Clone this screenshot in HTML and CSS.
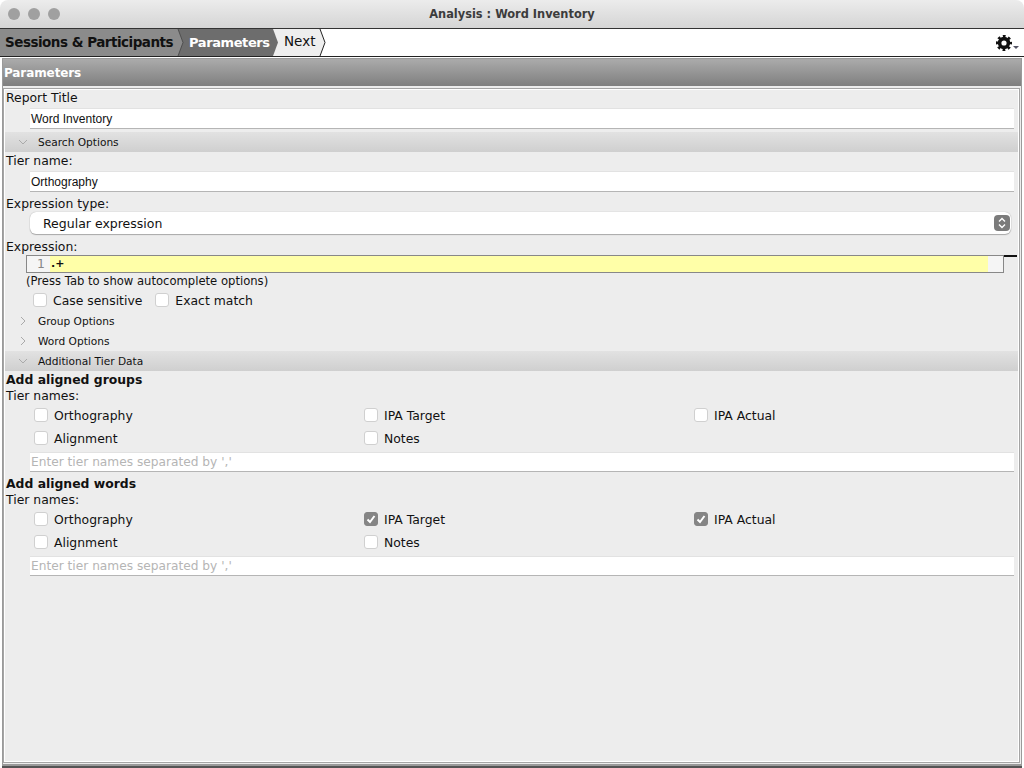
FILE: index.html
```html
<!DOCTYPE html>
<html lang="en">

<head>
  <meta charset="UTF-8">
  <title>Analysis : Word Inventory</title>
  <link rel="stylesheet" href="styles.css">
</head>

<body>

  <div class="titlebar">
    <span class="light"></span><span class="light"></span><span class="light"></span>
    <div class="window-title">Analysis : Word Inventory</div>
  </div>

  <div class="crumbs">
    <div class="crumb crumb-done">Sessions &amp; Participants</div>
    <svg class="sep" width="8" height="27" viewBox="0 0 8 27">
      <rect width="8" height="27" fill="#6d6d6d"/>
      <polygon points="0,0 2,0 7,13.5 2,27 0,27" fill="#8b8b8b"/>
      <polyline points="2,0 7,13.5 2,27" fill="none" stroke="#444" stroke-width="0.8"/>
    </svg>
    <div class="crumb crumb-current">Parameters</div>
    <svg class="sep" width="8" height="27" viewBox="0 0 8 27">
      <rect width="8" height="27" fill="#eee"/>
      <polygon points="0,0 2,0 7,13.5 2,27 0,27" fill="#6d6d6d"/>
    </svg>
    <div class="crumb crumb-next">Next</div>
    <svg class="sep" width="8" height="27" viewBox="0 0 8 27">
      <rect width="8" height="27" fill="#fff"/>
      <polygon points="0,0 2,0 7,13.5 2,27 0,27" fill="#eee"/>
      <polyline points="2,0 7,13.5 2,27" fill="none" stroke="#222" stroke-width="1"/>
    </svg>
    <div class="gear-box">
      <svg width="16" height="16" viewBox="0 0 16 16">
        <circle cx="8" cy="8" r="4.4" fill="none" stroke="#111" stroke-width="3.6"/>
        <circle cx="8" cy="8" r="6.8" fill="none" stroke="#111" stroke-width="2.6" stroke-dasharray="2.7 2.64" stroke-dashoffset="1.35"/>
      </svg>
      <span class="gear-arrow"></span>
    </div>
  </div>

  <div class="content">
    <div class="panel-header">Parameters</div>
    <div class="panel">

      <div class="label label-first">Report Title</div>
      <div class="field field-first">Word Inventory</div>

      <div class="section section-open section-search">
        <svg class="twisty" width="10" height="10" viewBox="0 0 10 10"><polyline points="1,3 5,7 9,3"/></svg>
        Search Options
      </div>
      <div class="label label-tier">Tier name:</div>
      <div class="field">Orthography</div>
      <div class="label label-type">Expression type:</div>
      <div class="combo">
        <span>Regular expression</span>
        <svg class="combo-btn" width="16" height="16" viewBox="0 0 16 16">
          <rect width="16" height="16" rx="4" fill="#7b7b7b"/>
          <polyline points="5,6.5 8,3.5 11,6.5" fill="none" stroke="#fff" stroke-width="1.4"/>
          <polyline points="5,9.5 8,12.5 11,9.5" fill="none" stroke="#fff" stroke-width="1.4"/>
        </svg>
      </div>
      <div class="label label-expr">Expression:</div>
      <div class="editor-row">
        <div class="editor">
          <div class="gutter">1</div>
          <div class="code">.+</div>
          <div class="editor-end"></div>
        </div>
        <div class="editor-mark"></div>
      </div>
      <div class="hint">(Press Tab to show autocomplete options)</div>
      <div class="check-row">
        <label class="check"><span class="box"></span>Case sensitive</label>
        <label class="check"><span class="box"></span>Exact match</label>
      </div>

      <div class="section section-closed">
        <svg class="twisty" width="10" height="10" viewBox="0 0 10 10"><polyline points="3,1 7,5 3,9"/></svg>
        Group Options
      </div>
      <div class="section section-closed">
        <svg class="twisty" width="10" height="10" viewBox="0 0 10 10"><polyline points="3,1 7,5 3,9"/></svg>
        Word Options
      </div>
      <div class="section section-open">
        <svg class="twisty" width="10" height="10" viewBox="0 0 10 10"><polyline points="1,3 5,7 9,3"/></svg>
        Additional Tier Data
      </div>

      <div class="group-title">Add aligned groups</div>
      <div class="tier-label">Tier names:</div>
      <div class="tier-grid">
        <label class="check"><span class="box"></span>Orthography</label>
        <label class="check"><span class="box"></span>IPA Target</label>
        <label class="check"><span class="box"></span>IPA Actual</label>
        <label class="check"><span class="box"></span>Alignment</label>
        <label class="check"><span class="box"></span>Notes</label>
      </div>
      <div class="field field-empty">Enter tier names separated by ','</div>

      <div class="group-title group-title-2">Add aligned words</div>
      <div class="tier-label">Tier names:</div>
      <div class="tier-grid">
        <label class="check"><span class="box"></span>Orthography</label>
        <label class="check"><span class="box box-on"><svg width="10" height="10" viewBox="0 0 10 10"><polyline points="1.5,5.5 4,8 8.5,2" fill="none" stroke="#fff" stroke-width="2"/></svg></span>IPA Target</label>
        <label class="check"><span class="box box-on"><svg width="10" height="10" viewBox="0 0 10 10"><polyline points="1.5,5.5 4,8 8.5,2" fill="none" stroke="#fff" stroke-width="2"/></svg></span>IPA Actual</label>
        <label class="check"><span class="box"></span>Alignment</label>
        <label class="check"><span class="box"></span>Notes</label>
      </div>
      <div class="field field-empty">Enter tier names separated by ','</div>

    </div>
  </div>

</body>

</html>
```

FILE: styles.css
```css
html, body {
  margin: 0;
  padding: 0;
}

body {
  width: 1024px;
  height: 768px;
  overflow: hidden;
  background-color: #fff;
  font-family: 'DejaVu Sans', sans-serif;
  font-size: 12.4px;
  color: #111;
  display: flex;
  flex-direction: column;
}

/* window title */
.titlebar {
  height: 28px;
  box-sizing: border-box;
  flex: none;
  display: flex;
  align-items: center;
  gap: 8px;
  padding-left: 8px;
  padding-bottom: 1px;
  background: linear-gradient(#ececec, #d5d5d5);
  border-radius: 8px 8px 0 0;
  position: relative;
}

.light {
  width: 12px;
  height: 12px;
  border-radius: 50%;
  background-color: #a0a0a0;
}

.window-title {
  position: absolute;
  left: 0;
  right: 0;
  text-align: center;
  font-weight: bold;
  font-size: 11.4px;
  color: #3c3c3c;
}

/* breadcrumb */
.crumbs {
  height: 29px;
  flex: none;
  display: flex;
  background-color: #fff;
  border-top: 1px solid #333;
  border-bottom: 1px solid #222;
  box-sizing: border-box;
}

.crumb {
  height: 27px;
  line-height: 27px;
  font-size: 13.5px;
  white-space: nowrap;
  box-sizing: border-box;
  padding-left: 5px;
}

.crumb-done {
  width: 176px;
  font-weight: bold;
  letter-spacing: -0.5px;
  background-color: #8b8b8b;
}

.crumb-current {
  width: 87px;
  font-size: 13px;
  font-weight: bold;
  letter-spacing: -0.4px;
  color: #fff;
  background-color: #6d6d6d;
}

.crumb-next {
  width: 39px;
  line-height: 25px;
  background-color: #eee;
}

.sep {
  flex: none;
  display: block;
}

.gear-box {
  margin-left: auto;
  width: 32px;
  display: flex;
  align-items: center;
  gap: 1px;
  padding-left: 4px;
  box-sizing: border-box;
}

.gear-arrow {
  margin-top: 9px;
  border-left: 3px solid transparent;
  border-right: 3px solid transparent;
  border-top: 3px solid #556;
}

/* main area */
.content {
  flex: none;
  height: 708px;
  margin: 1px 2px 0;
  box-sizing: border-box;
  border: 1px solid #9a9a9a;
  border-bottom: 2px solid #999;
  background-color: #ededed;
  box-shadow: 0 2px 0 #555;
  display: flex;
  flex-direction: column;
}

.panel-header {
  height: 27px;
  line-height: 28px;
  flex: none;
  padding-left: 1px;
  font-size: 12px;
  font-weight: bold;
  letter-spacing: -0.1px;
  color: #fff;
  background: linear-gradient(#ababab, #7f7f7f);
}

.panel {
  flex: 1;
  margin: 2px 1px 1px 0;
  border: 1px solid #a5a5a5;
  outline: 1px solid #fff;
  outline-offset: -2px;
  display: flex;
  flex-direction: column;
}

.label {
  height: 15px;
  line-height: 15px;
  padding-left: 2px;
  margin-top: 2px;
}

.label-first,
.label-tier {
  margin-top: 1px;
}

.label-type {
  margin-top: 4px;
}

.label-expr {
  margin-top: 5px;
}

.field {
  height: 21px;
  line-height: 20px;
  margin: 3px 5px 0 26px;
  padding-left: 1px;
  box-sizing: border-box;
  font-family: 'Liberation Sans', sans-serif;
  font-size: 12px;
  background-color: #fff;
  border-top: 1px solid #e2e2e2;
  border-bottom: 1px solid #b5b5b5;
}

.field-empty {
  height: 20px;
  line-height: 19px;
  color: #b5b5b5;
  font-family: 'DejaVu Sans', sans-serif;
  font-size: 12.2px;
  margin-top: 6px;
}

.section {
  height: 20px;
  flex: none;
  display: flex;
  align-items: center;
  font-size: 10.6px;
  padding-left: 14px;
  gap: 10px;
}

.section-open {
  background: linear-gradient(#e2e2e2, #cfcfcf);
}

.section-search {
  margin-top: 3px;
}

.twisty polyline {
  fill: none;
  stroke: #aaa;
  stroke-width: 1;
}

.combo {
  height: 22px;
  margin: 1px 8px 0 26px;
  padding: 0 1px 0 13px;
  box-sizing: border-box;
  display: flex;
  align-items: center;
  justify-content: space-between;
  font-size: 12.5px;
  background-color: #fff;
  border-radius: 6px;
  box-shadow: 0 0 1px #999, 0 1px 1px #aaa;
}

.editor-row {
  display: flex;
  margin: 1px 2px 0 22px;
}

.editor {
  width: 978px;
  height: 18px;
  box-sizing: border-box;
  display: flex;
  border: 1px solid #888;
}

.gutter {
  width: 23px;
  padding-right: 5px;
  box-sizing: border-box;
  text-align: right;
  line-height: 16px;
  color: #888;
  background-color: #f5f5f5;
}

.code {
  flex: 1;
  line-height: 16px;
  padding-left: 1px;
  font-weight: bold;
  font-size: 11px;
  background-color: #ffffa8;
}

.editor-end {
  width: 15px;
  background-color: #f5f5f5;
}

.editor-mark {
  flex: 1;
  height: 2px;
  background-color: #111;
}

.hint {
  margin: 1px 0 0 22px;
  height: 15px;
  line-height: 15px;
  font-size: 11.6px;
}

.check-row {
  display: flex;
  gap: 13px;
  height: 16px;
  margin: 3px 0 3px 29px;
}

.check {
  display: flex;
  align-items: center;
  gap: 6px;
  height: 16px;
}

.box {
  width: 14px;
  height: 14px;
  flex: none;
  box-sizing: border-box;
  display: flex;
  align-items: center;
  justify-content: center;
  background-color: #fff;
  border: 1px solid #d0d0d0;
  border-radius: 3px;
}

.box-on {
  background-color: #858585;
  border-color: #858585;
}

.group-title {
  height: 15px;
  line-height: 15px;
  margin-top: 1px;
  padding-left: 2px;
  font-weight: bold;
}

.group-title-2 {
  margin-top: 4px;
}

.tier-label {
  height: 15px;
  line-height: 15px;
  margin-top: 1px;
  padding-left: 2px;
}

.tier-grid {
  display: grid;
  grid-template-columns: 330px 330px 330px;
  row-gap: 7px;
  margin: 4px 0 0 30px;
}
```
